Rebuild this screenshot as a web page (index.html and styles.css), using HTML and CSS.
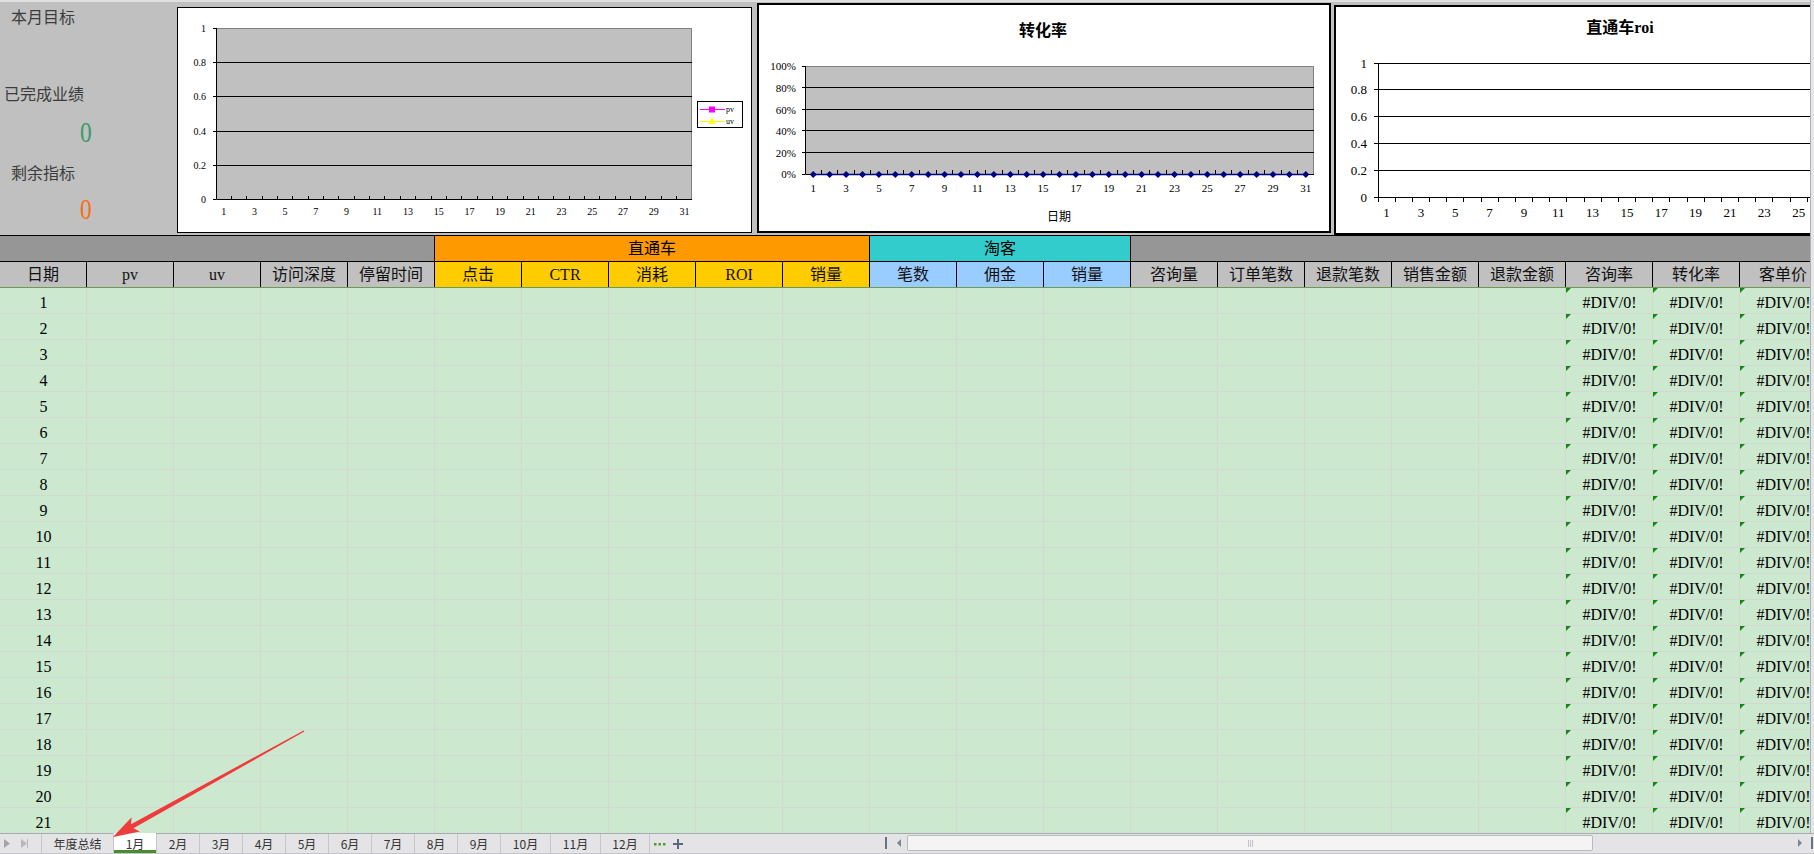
FILE: index.html
```html
<!DOCTYPE html>
<html lang="zh-CN">
<head>
<meta charset="utf-8">
<title>月度数据</title>
<link rel="stylesheet" href="styles.css">
</head>
<body>
<div class="app">
  <div class="main">
    <div class="content">
      <div class="dash">
        <div class="summary">
          <div class="lbl l1">本月目标</div>
          <div class="lbl l2">已完成业绩</div>
          <div class="val v1"><span>0</span></div>
          <div class="lbl l3">剩余指标</div>
          <div class="val v2"><span>0</span></div>
        </div>
        <div class="chart c1">
          <svg width="573" height="224" viewBox="0 0 573 224">
            <rect x="38" y="20" width="476" height="171" fill="#c0c0c0"/>
            <path d="M38 20.5H513.5V191" fill="none" stroke="#808080"/>
            <path d="M38 54.5H514M38 88.5H514M38 123.5H514M38 157.5H514" stroke="#000"/>
            <path d="M38.5 20V191.5H514M35 20.5H38M35 54.5H38M35 88.5H38M35 123.5H38M35 157.5H38M35 191.5H38" fill="none" stroke="#000"/>
            <path d="M53.5 188v3M68.5 188v3M84.5 188v3M99.5 188v3M114.5 188v3M130.5 188v3M145.5 188v3M160.5 188v3M176.5 188v3M191.5 188v3M206.5 188v3M222.5 188v3M237.5 188v3M253.5 188v3M268.5 188v3M283.5 188v3M299.5 188v3M314.5 188v3M329.5 188v3M345.5 188v3M360.5 188v3M375.5 188v3M391.5 188v3M406.5 188v3M421.5 188v3M437.5 188v3M452.5 188v3M467.5 188v3M483.5 188v3M498.5 188v3" stroke="#000"/>
            <g class="t9" text-anchor="end">
              <text x="28" y="24">1</text>
              <text x="28" y="58">0.8</text>
              <text x="28" y="92">0.6</text>
              <text x="28" y="127">0.4</text>
              <text x="28" y="161">0.2</text>
              <text x="28" y="195">0</text>
            </g>
            <g class="t9" text-anchor="middle">
              <text x="45.7" y="207">1</text><text x="76.4" y="207">3</text><text x="107.1" y="207">5</text><text x="137.8" y="207">7</text>
              <text x="168.5" y="207">9</text><text x="199.3" y="207">11</text><text x="230" y="207">13</text><text x="260.7" y="207">15</text>
              <text x="291.4" y="207">17</text><text x="322.1" y="207">19</text><text x="352.8" y="207">21</text><text x="383.5" y="207">23</text>
              <text x="414.2" y="207">25</text><text x="445" y="207">27</text><text x="475.7" y="207">29</text><text x="506.4" y="207">31</text>
            </g>
            <rect x="519.5" y="93.5" width="45" height="26" fill="#fff" stroke="#000"/>
            <path d="M522 101.5H547" stroke="#ff00ff"/>
            <rect x="531" y="98.5" width="6" height="6" fill="#ff00ff"/>
            <path d="M522 113.5H547" stroke="#ffff00"/>
            <path d="M534 109.5L537.5 116L530.5 116Z" fill="#ffff00"/>
            <text class="t8" x="548" y="104">pv</text>
            <text class="t8" x="548" y="116">uv</text>
          </svg>
        </div>
        <div class="chart c2">
          <svg width="570" height="226" viewBox="0 0 570 226">
            <defs><path id="dm" d="M0 -3.5L3.5 0L0 3.5L-3.5 0Z" fill="#000080"/></defs>
            <text class="ttl" x="284" y="31" text-anchor="middle">转化率</text>
            <rect x="46" y="61" width="509" height="108" fill="#c0c0c0"/>
            <path d="M46 61.5H554.5V169" fill="none" stroke="#808080"/>
            <path d="M46 82.5H555M46 104.5H555M46 125.5H555M46 147.5H555" stroke="#000"/>
            <path d="M46.5 61V169.5H555M43 61.5H46M43 82.5H46M43 104.5H46M43 125.5H46M43 147.5H46M43 169.5H46" fill="none" stroke="#000"/>
            <path d="M62.5 165v4M78.5 165v4M95.5 165v4M111.5 165v4M128.5 165v4M144.5 165v4M160.5 165v4M177.5 165v4M193.5 165v4M210.5 165v4M226.5 165v4M243.5 165v4M259.5 165v4M275.5 165v4M292.5 165v4M308.5 165v4M325.5 165v4M341.5 165v4M358.5 165v4M374.5 165v4M390.5 165v4M407.5 165v4M423.5 165v4M440.5 165v4M456.5 165v4M472.5 165v4M489.5 165v4M505.5 165v4M522.5 165v4M538.5 165v4" stroke="#000"/>
            <path d="M54.2 169.5H546.8" stroke="#000080" stroke-width="1.5"/>
            <g>
              <use href="#dm" x="54.2" y="169.5"/><use href="#dm" x="70.6" y="169.5"/><use href="#dm" x="87.1" y="169.5"/><use href="#dm" x="103.5" y="169.5"/>
              <use href="#dm" x="119.9" y="169.5"/><use href="#dm" x="136.3" y="169.5"/><use href="#dm" x="152.7" y="169.5"/><use href="#dm" x="169.2" y="169.5"/>
              <use href="#dm" x="185.6" y="169.5"/><use href="#dm" x="202" y="169.5"/><use href="#dm" x="218.4" y="169.5"/><use href="#dm" x="234.8" y="169.5"/>
              <use href="#dm" x="251.3" y="169.5"/><use href="#dm" x="267.7" y="169.5"/><use href="#dm" x="284.1" y="169.5"/><use href="#dm" x="300.5" y="169.5"/>
              <use href="#dm" x="316.9" y="169.5"/><use href="#dm" x="333.4" y="169.5"/><use href="#dm" x="349.8" y="169.5"/><use href="#dm" x="366.2" y="169.5"/>
              <use href="#dm" x="382.6" y="169.5"/><use href="#dm" x="399" y="169.5"/><use href="#dm" x="415.5" y="169.5"/><use href="#dm" x="431.9" y="169.5"/>
              <use href="#dm" x="448.3" y="169.5"/><use href="#dm" x="464.7" y="169.5"/><use href="#dm" x="481.1" y="169.5"/><use href="#dm" x="497.6" y="169.5"/>
              <use href="#dm" x="514" y="169.5"/><use href="#dm" x="530.4" y="169.5"/><use href="#dm" x="546.8" y="169.5"/>
            </g>
            <g class="t11" text-anchor="end">
              <text x="37" y="65">100%</text>
              <text x="37" y="86.5">80%</text>
              <text x="37" y="108.5">60%</text>
              <text x="37" y="129.5">40%</text>
              <text x="37" y="151.5">20%</text>
              <text x="37" y="173">0%</text>
            </g>
            <g class="t11" text-anchor="middle">
              <text x="54.2" y="187">1</text><text x="87.1" y="187">3</text><text x="119.9" y="187">5</text><text x="152.7" y="187">7</text>
              <text x="185.6" y="187">9</text><text x="218.4" y="187">11</text><text x="251.3" y="187">13</text><text x="284.1" y="187">15</text>
              <text x="316.9" y="187">17</text><text x="349.8" y="187">19</text><text x="382.6" y="187">21</text><text x="415.5" y="187">23</text>
              <text x="448.3" y="187">25</text><text x="481.1" y="187">27</text><text x="514" y="187">29</text><text x="546.8" y="187">31</text>
            </g>
            <text class="t12" x="300" y="216" text-anchor="middle">日期</text>
          </svg>
        </div>
        <div class="chart c3">
          <svg width="576" height="226" viewBox="0 0 576 226">
            <text class="ttl" x="284" y="26" text-anchor="middle">直通车roi</text>
            <path d="M42 56.5H576M42 82.5H576M42 109.5H576M42 136.5H576M42 163.5H576M42 190.5H576" stroke="#000"/>
            <path d="M42.5 56V195M38 56.5H42M38 82.5H42M38 109.5H42M38 136.5H42M38 163.5H42M38 190.5H42" fill="none" stroke="#000"/>
            <path d="M59.5 190v5M76.5 190v5M93.5 190v5M110.5 190v5M127.5 190v5M145.5 190v5M162.5 190v5M179.5 190v5M196.5 190v5M213.5 190v5M230.5 190v5M248.5 190v5M265.5 190v5M282.5 190v5M299.5 190v5M316.5 190v5M333.5 190v5M351.5 190v5M368.5 190v5M385.5 190v5M402.5 190v5M419.5 190v5M436.5 190v5M454.5 190v5M471.5 190v5M488.5 190v5M505.5 190v5M522.5 190v5M539.5 190v5M557.5 190v5" stroke="#000"/>
            <g class="t13" text-anchor="end">
              <text x="31" y="61">1</text>
              <text x="31" y="87">0.8</text>
              <text x="31" y="114">0.6</text>
              <text x="31" y="141">0.4</text>
              <text x="31" y="168">0.2</text>
              <text x="31" y="195">0</text>
            </g>
            <g class="t13" text-anchor="middle">
              <text x="50.6" y="210">1</text><text x="84.9" y="210">3</text><text x="119.2" y="210">5</text><text x="153.6" y="210">7</text>
              <text x="187.9" y="210">9</text><text x="222.3" y="210">11</text><text x="256.6" y="210">13</text><text x="291" y="210">15</text>
              <text x="325.3" y="210">17</text><text x="359.6" y="210">19</text><text x="394" y="210">21</text><text x="428.3" y="210">23</text>
              <text x="462.7" y="210">25</text>
            </g>
          </svg>
        </div>
      </div>

      <div class="ghead">
        <div class="gc gray s5"></div>
        <div class="gc orange s5">直通车</div>
        <div class="gc teal s3">淘客</div>
        <div class="gc gray s8"></div>
      </div>

      <div class="chead">
        <div class="hc gy">日期</div>
        <div class="hc gy">pv</div>
        <div class="hc gy">uv</div>
        <div class="hc gy">访问深度</div>
        <div class="hc gy">停留时间</div>
        <div class="hc yl">点击</div>
        <div class="hc yl">CTR</div>
        <div class="hc yl">消耗</div>
        <div class="hc yl">ROI</div>
        <div class="hc yl">销量</div>
        <div class="hc bl">笔数</div>
        <div class="hc bl">佣金</div>
        <div class="hc bl">销量</div>
        <div class="hc gy">咨询量</div>
        <div class="hc gy">订单笔数</div>
        <div class="hc gy">退款笔数</div>
        <div class="hc gy">销售金额</div>
        <div class="hc gy">退款金额</div>
        <div class="hc gy">咨询率</div>
        <div class="hc gy">转化率</div>
        <div class="hc gy">客单价</div>
      </div>

      <div class="rows">
        <div class="row"><span class="n">1</span><span class="e">#DIV/0!</span><span class="e">#DIV/0!</span><span class="e">#DIV/0!</span></div>
        <div class="row"><span class="n">2</span><span class="e">#DIV/0!</span><span class="e">#DIV/0!</span><span class="e">#DIV/0!</span></div>
        <div class="row"><span class="n">3</span><span class="e">#DIV/0!</span><span class="e">#DIV/0!</span><span class="e">#DIV/0!</span></div>
        <div class="row"><span class="n">4</span><span class="e">#DIV/0!</span><span class="e">#DIV/0!</span><span class="e">#DIV/0!</span></div>
        <div class="row"><span class="n">5</span><span class="e">#DIV/0!</span><span class="e">#DIV/0!</span><span class="e">#DIV/0!</span></div>
        <div class="row"><span class="n">6</span><span class="e">#DIV/0!</span><span class="e">#DIV/0!</span><span class="e">#DIV/0!</span></div>
        <div class="row"><span class="n">7</span><span class="e">#DIV/0!</span><span class="e">#DIV/0!</span><span class="e">#DIV/0!</span></div>
        <div class="row"><span class="n">8</span><span class="e">#DIV/0!</span><span class="e">#DIV/0!</span><span class="e">#DIV/0!</span></div>
        <div class="row"><span class="n">9</span><span class="e">#DIV/0!</span><span class="e">#DIV/0!</span><span class="e">#DIV/0!</span></div>
        <div class="row"><span class="n">10</span><span class="e">#DIV/0!</span><span class="e">#DIV/0!</span><span class="e">#DIV/0!</span></div>
        <div class="row"><span class="n">11</span><span class="e">#DIV/0!</span><span class="e">#DIV/0!</span><span class="e">#DIV/0!</span></div>
        <div class="row"><span class="n">12</span><span class="e">#DIV/0!</span><span class="e">#DIV/0!</span><span class="e">#DIV/0!</span></div>
        <div class="row"><span class="n">13</span><span class="e">#DIV/0!</span><span class="e">#DIV/0!</span><span class="e">#DIV/0!</span></div>
        <div class="row"><span class="n">14</span><span class="e">#DIV/0!</span><span class="e">#DIV/0!</span><span class="e">#DIV/0!</span></div>
        <div class="row"><span class="n">15</span><span class="e">#DIV/0!</span><span class="e">#DIV/0!</span><span class="e">#DIV/0!</span></div>
        <div class="row"><span class="n">16</span><span class="e">#DIV/0!</span><span class="e">#DIV/0!</span><span class="e">#DIV/0!</span></div>
        <div class="row"><span class="n">17</span><span class="e">#DIV/0!</span><span class="e">#DIV/0!</span><span class="e">#DIV/0!</span></div>
        <div class="row"><span class="n">18</span><span class="e">#DIV/0!</span><span class="e">#DIV/0!</span><span class="e">#DIV/0!</span></div>
        <div class="row"><span class="n">19</span><span class="e">#DIV/0!</span><span class="e">#DIV/0!</span><span class="e">#DIV/0!</span></div>
        <div class="row"><span class="n">20</span><span class="e">#DIV/0!</span><span class="e">#DIV/0!</span><span class="e">#DIV/0!</span></div>
        <div class="row"><span class="n">21</span><span class="e">#DIV/0!</span><span class="e">#DIV/0!</span><span class="e">#DIV/0!</span></div>
      </div>
    </div>
    <div class="vscroll"></div>
  </div>

  <div class="tabbar">
    <div class="nav">
      <svg width="41" height="19" viewBox="0 0 41 19">
        <path d="M4 5L10 9.5L4 14Z" fill="#a4a4a8"/>
        <path d="M21 5L27 9.5L21 14Z" fill="#b8b8bc"/>
        <path d="M27.5 5V14" stroke="#b8b8bc"/>
      </svg>
    </div>
    <div class="tab wide">年度总结</div>
    <div class="tab on">1月</div>
    <div class="tab">2月</div>
    <div class="tab">3月</div>
    <div class="tab">4月</div>
    <div class="tab">5月</div>
    <div class="tab">6月</div>
    <div class="tab">7月</div>
    <div class="tab">8月</div>
    <div class="tab">9月</div>
    <div class="tab mid">10月</div>
    <div class="tab mid">11月</div>
    <div class="tab mid last">12月</div>
    <div class="more">
      <svg width="12" height="19" viewBox="0 0 12 19"><path d="M0 9h2.5v2.5H0zM4.5 9H7v2.5H4.5zM9 9h2.5v2.5H9z" fill="#4e9a2a"/></svg>
    </div>
    <div class="plus">
      <svg width="10" height="19" viewBox="0 0 10 19"><path d="M0 10H10M5 5V15" stroke="#5d677b" stroke-width="2"/></svg>
    </div>
    <div class="vbar"></div>
    <div class="larr"></div>
    <div class="thumb"><span class="grip"></span></div>
    <div class="rarr"></div>
    <div class="vbar vbar2"></div>
  </div>
</div>

<svg class="arrow" width="1814" height="854" viewBox="0 0 1814 854">
  <polygon points="304.4,731.6 133.4,828.3 139.8,831.6 113,837 131.6,817.2 131,824.3 303.6,730.4" fill="#ef3b3b"/>
</svg>
</body>
</html>
```

FILE: styles.css
```css
* {
  box-sizing: border-box;
  margin: 0;
  padding: 0;
}

html, body {
  width: 1814px;
  height: 854px;
  overflow: hidden;
}

body {
  position: relative;
  font-family: "Liberation Serif", "Noto Sans CJK SC", serif;
  font-size: 16px;
  color: #000;
  background: #cce8cf;
}

.app {
  display: flex;
  flex-direction: column;
  height: 854px;
}

.main {
  display: flex;
  height: 833px;
  flex: none;
}

.content {
  width: 1810px;
  flex: none;
  overflow: hidden;
  display: flex;
  flex-direction: column;
}

.vscroll {
  width: 4px;
  flex: none;
  background: #e6e6e8;
  border-left: 1px solid #b0b0b6;
}

/* ---------- dashboard area ---------- */
.dash {
  height: 235px;
  flex: none;
  display: flex;
  align-items: flex-start;
  background: #c0c0c0;
  border-top: 2px solid #e0e0e0;
}

.summary {
  width: 177px;
  flex: none;
  display: flex;
  flex-direction: column;
  font-family: "Noto Sans CJK SC", sans-serif;
  color: #3c3c3c;
}

.lbl {
  height: 16px;
  line-height: 16px;
  font-size: 16px;
  white-space: nowrap;
}

.l1 { margin-top: 6px; padding-left: 11px; }
.l2 { margin-top: 61px; padding-left: 4px; }
.l3 { margin-top: 17px; padding-left: 11px; }

.val {
  height: 30px;
  line-height: 30px;
  font-family: "Liberation Serif", serif;
  font-size: 30px;
  padding-left: 80px;
}

.val span {
  display: inline-block;
  transform: scaleX(0.78);
  transform-origin: left center;
}

.v1 { margin-top: 16px; color: #3a9a68; }
.v2 { margin-top: 14px; color: #ff6a10; }

.chart {
  flex: none;
  background: #fff;
  border: 1px solid #000;
  overflow: hidden;
}

.chart svg {
  display: block;
}

.c1 {
  width: 575px;
  height: 226px;
  margin-top: 5px;
}

.c2 {
  width: 574px;
  height: 230px;
  margin: 1px 0 0 5px;
  border-width: 2px;
}

.c3 {
  width: 580px;
  height: 230px;
  margin: 3px 0 0 3px;
  border-width: 2px;
}

.t8 { font: 8px "Liberation Serif", serif; fill: #000; }
.t9 { font: 10px "Liberation Serif", serif; fill: #000; }
.t11 { font: 11px "Liberation Serif", serif; fill: #000; }
.t12 { font: 12px "Noto Sans CJK SC", sans-serif; fill: #000; }
.t13 { font: 13px "Liberation Serif", serif; fill: #000; }
.ttl { font: 700 16px "Liberation Serif", "Noto Sans CJK SC", serif; fill: #000; }

/* ---------- table headers ---------- */
.ghead,
.chead,
.row {
  display: grid;
  grid-template-columns: repeat(21, 87px);
  flex: none;
}

.ghead {
  height: 26px;
  border-top: 1px solid #000;
}

.gc {
  line-height: 25px;
  text-align: center;
  border-right: 1px solid #000;
}

.s3 { grid-column: span 3; }
.s5 { grid-column: span 5; }
.s8 { grid-column: span 8; }

.gray { background: #969696; }
.orange { background: #ff9900; }
.teal { background: #33cccc; }

.chead {
  height: 27px;
  border-top: 1px solid #000;
  border-bottom: 1px solid #6f9a55;
}

.hc {
  line-height: 25px;
  text-align: center;
  border-right: 1px solid #000;
  white-space: nowrap;
  color: #111;
}

.gy { background: #c0c0c0; }
.yl { background: #ffcc00; }
.bl { background: #99ccff; }

/* ---------- data rows ---------- */
.rows {
  display: flex;
  flex-direction: column;
}

.row {
  height: 26px;
  border-bottom: 1px solid #d6d6d6;
  background-color: #cce8cf;
  background-image: repeating-linear-gradient(to right, transparent 0 86px, #d6d6d6 86px 87px);
}

.n,
.e {
  line-height: 21px;
  padding-top: 4px;
  text-align: center;
  white-space: nowrap;
}

.n + .e {
  grid-column-start: 19;
}

.e {
  position: relative;
}

.e::before {
  content: "";
  position: absolute;
  left: 0;
  top: 0;
  width: 0;
  height: 0;
  border-top: 5px solid #118a11;
  border-right: 5px solid transparent;
}

/* ---------- sheet tabs ---------- */
.tabbar {
  height: 21px;
  flex: none;
  display: flex;
  align-items: stretch;
  background: #e4e4e6;
  border-top: 1px solid #a9a9b1;
  border-bottom: 1px solid #c4c4ca;
  font-family: "Noto Sans CJK SC", sans-serif;
  font-size: 12px;
  color: #333;
}

.nav {
  width: 41px;
  flex: none;
}

.nav svg,
.more svg,
.plus svg {
  display: block;
}

.tab {
  width: 43px;
  flex: none;
  display: flex;
  align-items: center;
  justify-content: center;
  border-left: 1px solid #c6c6cc;
  white-space: nowrap;
}

.tab.wide { width: 72px; }
.tab.mid { width: 50px; }
.tab.last { border-right: 1px solid #c6c6cc; }

.tab.on {
  background: #fff;
  margin-top: -1px;
  box-shadow: inset 0 -3px 0 #4b8b2b;
}

.more {
  margin-left: 4px;
  width: 12px;
  flex: none;
}

.plus {
  margin-left: 7px;
  width: 10px;
  flex: none;
}

.vbar {
  margin: 3px 0 0 202px;
  width: 2px;
  height: 12px;
  flex: none;
  background: #6a7286;
}

.larr {
  margin: 5px 0 0 10px;
  width: 0;
  height: 0;
  flex: none;
  border-top: 4px solid transparent;
  border-bottom: 4px solid transparent;
  border-right: 4px solid #7c8498;
}

.thumb {
  margin: 1px 0 2px 6px;
  width: 686px;
  flex: none;
  background: #f4f4f5;
  border: 1px solid #b9b9c2;
  border-radius: 2px;
  display: flex;
  align-items: center;
  justify-content: center;
}

.grip {
  width: 5px;
  height: 7px;
  border-left: 1px solid #c2c2c8;
  border-right: 1px solid #c2c2c8;
  background: linear-gradient(to right, transparent 0 1px, #c2c2c8 1px 2px, transparent 2px);
}

.rarr {
  margin: 5px 0 0 205px;
  width: 0;
  height: 0;
  flex: none;
  border-top: 4px solid transparent;
  border-bottom: 4px solid transparent;
  border-left: 4px solid #7c8498;
}

.vbar2 {
  margin-left: 9px;
}

/* ---------- annotation arrow ---------- */
.arrow {
  position: absolute;
  left: 0;
  top: 0;
  pointer-events: none;
}
```
